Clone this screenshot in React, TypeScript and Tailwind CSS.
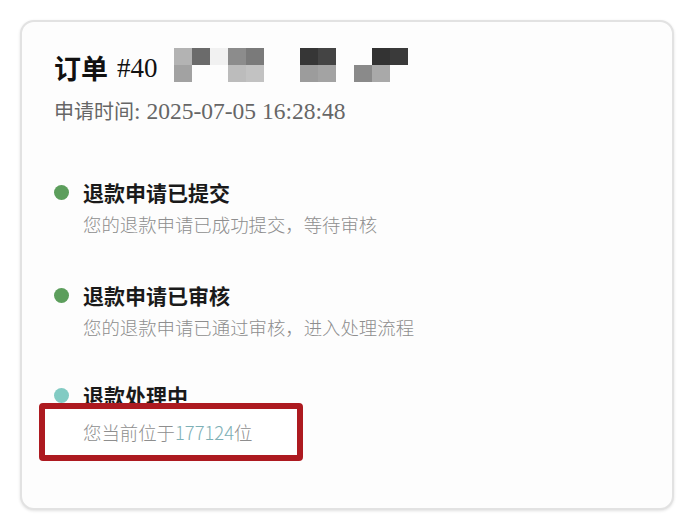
import React from "react";

const cjk = { fontFamily: '"Noto Sans CJK SC", "Noto Sans", sans-serif' };
const serif = { fontFamily: '"Liberation Serif", "Noto Sans CJK SC", serif' };

const row1 = ["#b3b3b3", "#6b6b6b", "#f1f1f1", "#8c8c8c", "#7a7a7a", "transparent", "transparent", "#363636", "#444444", "transparent", "transparent", "#333333", "#3a3a3a"];
const row2 = ["#a2a2a2", "transparent", "transparent", "#bcbcbc", "#c2c2c2", "transparent", "transparent", "#9c9c9c", "#a3a3a3", "transparent", "#8a8a8a", "#a9a9a9", "transparent"];

function Mosaic() {
  return (
    <div className="flex flex-col">
      {[row1, row2].map((r, i) => (
        <div key={i} className="flex">
          {r.map((c, j) => (
            <div key={j} className="w-[18px] h-[17px]" style={{ background: c }} />
          ))}
        </div>
      ))}
    </div>
  );
}

function StepTitle({ color, title }: { color: string; title: string }) {
  return (
    <div className="flex items-center h-[28px]">
      <span className="w-[15px] h-[15px] rounded-full shrink-0" style={{ background: color }} />
      <span className="ml-[14px] text-[21px] leading-[28px] font-bold text-[#1a1a1a]">{title}</span>
    </div>
  );
}

function Step({ color, title, desc, className }: { color: string; title: string; desc: string; className?: string }) {
  return (
    <div className={className}>
      <StepTitle color={color} title={title} />
      <div className="pl-[29px] mt-[5px] text-[18.4px] leading-[26px] text-[#8e8e8e] font-light">{desc}</div>
    </div>
  );
}

export default function App() {
  return (
    <div className="w-[694px] h-[532px] bg-white pt-[20px] pl-[20px]" style={cjk}>
      <div className="w-[654px] h-[490px] rounded-[14px] border-2 border-[#e2e2e2] bg-[#fdfdfd] shadow-[0_1px_3px_rgba(0,0,0,0.12)] pl-[32px] pt-[24px]">
        <div className="flex items-center h-[44px]">
          <span className="text-[27px] leading-[32px] font-semibold text-[#111]">订单</span>
          <span className="ml-[9px] text-[27px] leading-[32px] text-[#111]" style={serif}>#40</span>
          <div className="ml-[16px] mt-[-6px]">
            <Mosaic />
          </div>
        </div>
        <div className="mt-[7px] flex items-center h-[28px] text-[#666]">
          <span className="text-[20px] leading-[28px]">申请时间</span>
          <span className="text-[23.5px] leading-[28px]" style={serif}>: 2025-07-05 16:28:48</span>
        </div>

        <Step className="mt-[53px]" color="#5c9e5c" title="退款申请已提交" desc="您的退款申请已成功提交，等待审核" />
        <Step className="mt-[44px]" color="#5c9e5c" title="退款申请已审核" desc="您的退款申请已通过审核，进入处理流程" />
        <div className="mt-[41px]">
          <StepTitle color="#82cbc3" title="退款处理中" />
          <div className="relative ml-[-15px] mt-[-6px] w-[264px] h-[58px] border-[6px] border-[#ad1a20] rounded-[4px] bg-white flex items-center pl-[38px]">
            <span className="text-[18.4px] leading-[26px] text-[#8e8e8e] font-light">
              您当前位于<span className="text-[#7eb0b6]">177124</span>位
            </span>
          </div>
        </div>
      </div>
    </div>
  );
}
